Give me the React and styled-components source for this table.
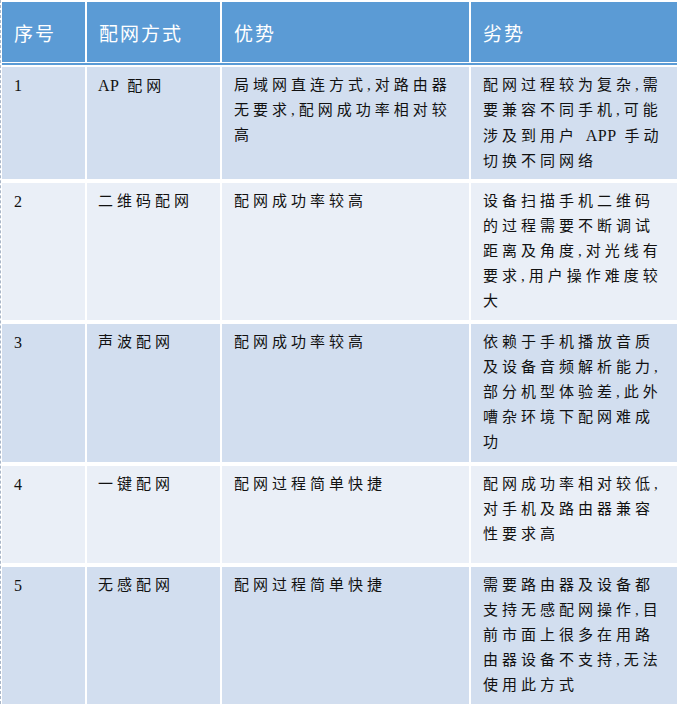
import styled, { createGlobalStyle } from "styled-components";

const Global = createGlobalStyle`
    html, body {
        margin: 0;
        padding: 0;
        background: #ffffff;
    }
    body {
        font-family: "Liberation Serif", "Noto Sans CJK SC", serif;
    }
`;

const Page = styled.div`
    width: 677px;
    height: 704px;
    overflow: hidden;
    border-left: 1px dashed #a9b6c8;
    padding: 2px 0 0 1px;
    box-sizing: border-box;
`;

const Table = styled.div`
    display: flex;
    flex-direction: column;
    gap: 2px;
`;

const Row = styled.div`
    display: grid;
    grid-template-columns: 83px 133px 247px 207px;
    column-gap: 2px;
    min-height: ${p => p.h}px;
`;

const HeadCell = styled.div`
    display: flex;
    align-items: center;
    padding: 0 12px;
    background: #5b9bd5;
    color: #ffffff;
    font-size: 19px;
    letter-spacing: 2px;
    height: 60px;
`;

const Rule = styled.div`
    height: 2px;
    margin-top: 1px;
    background: #5b9bd5;
`;

const Body = styled.div`
    display: flex;
    flex-direction: column;
    gap: 4px;
`;

const Cell = styled.div`
    padding: 6px 12px 0 ${p => p.indent || 12}px;
    background: ${p => (p.alt ? "#eaeff7" : "#d2deef")};
    color: #111111;
    font-size: 15px;
    line-height: 25px;
    letter-spacing: 4px;
`;

const Line = styled.div`
    white-space: nowrap;
`;

const Latin = styled.span`
    font-size: 16px;
    letter-spacing: 0.5px;
`;

const Num = styled.span`
    font-size: 16px;
    letter-spacing: 0;
`;

const rows = [
    {
        h: 112,
        no: "1",
        name: [<Latin key="a">AP</Latin>, " 配网"],
        pro: ["局域网直连方式,对路由器", "无要求,配网成功率相对较", "高"],
        con: [
            "配网过程较为复杂,需",
            "要兼容不同手机,可能",
            ["涉及到用户 ", <Latin key="b">APP</Latin>, " 手动"],
            "切换不同网络",
        ],
    },
    {
        h: 137,
        no: "2",
        name: "二维码配网",
        pro: ["配网成功率较高"],
        con: ["设备扫描手机二维码", "的过程需要不断调试", "距离及角度,对光线有", "要求,用户操作难度较", "大"],
    },
    {
        h: 138,
        no: "3",
        name: "声波配网",
        pro: ["配网成功率较高"],
        con: ["依赖于手机播放音质", "及设备音频解析能力,", "部分机型体验差,此外", "嘈杂环境下配网难成", "功"],
    },
    {
        h: 97,
        no: "4",
        name: "一键配网",
        pro: ["配网过程简单快捷"],
        con: ["配网成功率相对较低,", "对手机及路由器兼容", "性要求高"],
    },
    {
        h: 140,
        no: "5",
        name: "无感配网",
        pro: ["配网过程简单快捷"],
        con: ["需要路由器及设备都", "支持无感配网操作,目", "前市面上很多在用路", "由器设备不支持,无法", "使用此方式"],
    },
];

const Lines = ({ items }) => items.map((t, i) => <Line key={i}>{t}</Line>);

const App = () => {
    return (
        <>
            <Global />
            <Page>
                <Table>
                    <div>
                        <Row h={60}>
                            <HeadCell>序号</HeadCell>
                            <HeadCell>配网方式</HeadCell>
                            <HeadCell>优势</HeadCell>
                            <HeadCell>劣势</HeadCell>
                        </Row>
                        <Rule />
                    </div>
                    <Body>
                        {rows.map((r, i) => (
                            <Row key={r.no} h={r.h}>
                                <Cell alt={i % 2 === 1}>
                                    <Num>{r.no}</Num>
                                </Cell>
                                <Cell alt={i % 2 === 1} indent={11}>
                                    <Line>{r.name}</Line>
                                </Cell>
                                <Cell alt={i % 2 === 1}>
                                    <Lines items={r.pro} />
                                </Cell>
                                <Cell alt={i % 2 === 1}>
                                    <Lines items={r.con} />
                                </Cell>
                            </Row>
                        ))}
                    </Body>
                </Table>
            </Page>
        </>
    );
};

export default App;
